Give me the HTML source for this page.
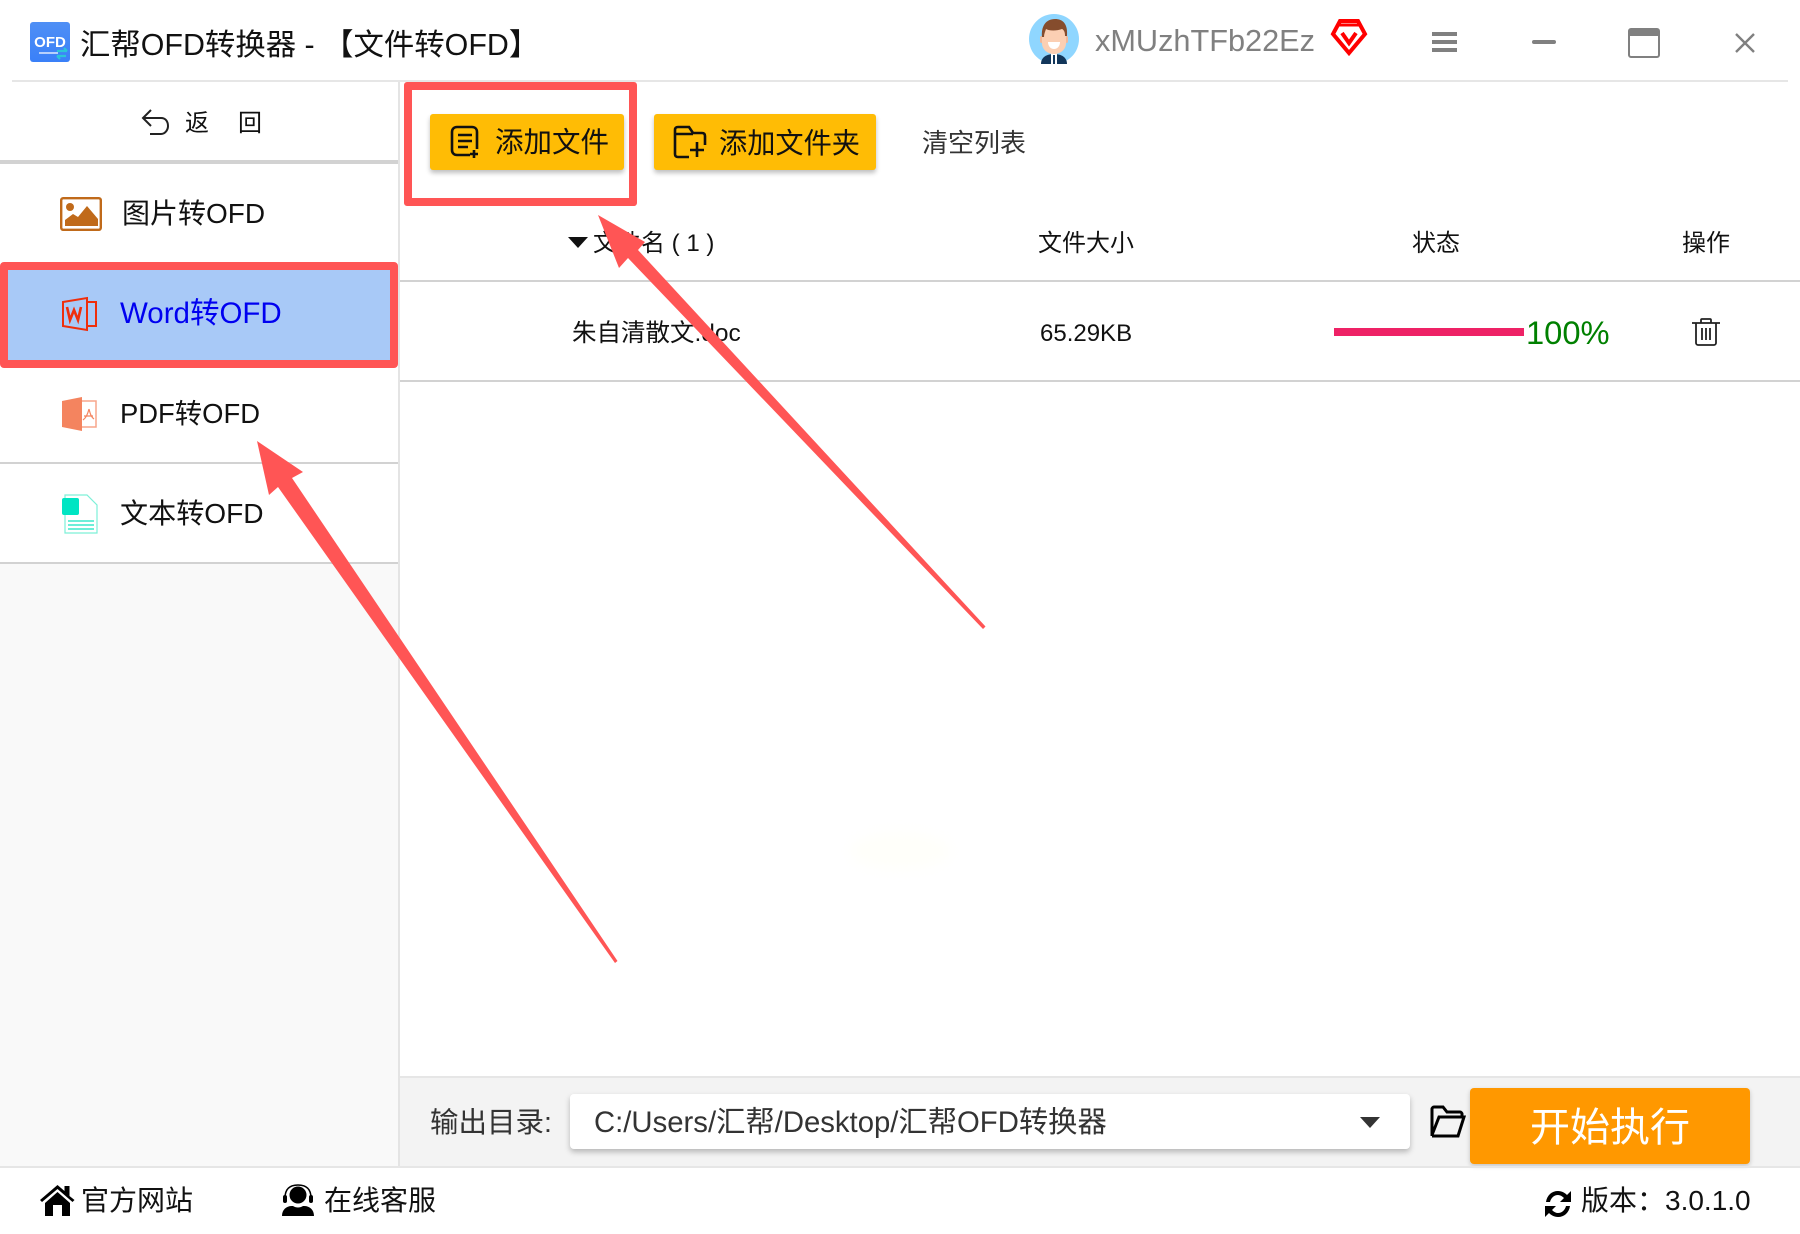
<!DOCTYPE html>
<html lang="zh">
<head>
<meta charset="utf-8">
<title>汇帮OFD转换器</title>
<style>
html,body{margin:0;padding:0;background:#fff}
#app{position:relative;width:1800px;height:1234px;overflow:hidden;background:#fff;font-family:"Liberation Sans","Noto Sans CJK SC",sans-serif;color:#111}
.t{position:absolute;white-space:nowrap;line-height:40px;height:40px;margin-top:1px}
.b{position:absolute}
svg{position:absolute;overflow:visible}
</style>
</head>
<body>
<div id="app">
  <!-- title bar -->
  <div class="b" style="left:12px;top:80px;width:1776px;height:2px;background:#e6e6e6"></div>
  <svg style="left:30px;top:22px" width="40" height="40" viewBox="0 0 40 40">
    <defs><linearGradient id="lg" x1="0" y1="0" x2="0" y2="1"><stop offset="0" stop-color="#4f8ff5"/><stop offset="1" stop-color="#3a80f8"/></linearGradient></defs>
    <rect width="40" height="40" rx="3" fill="url(#lg)"/>
    <text x="20" y="25" font-family="Liberation Sans" font-weight="700" font-size="15" fill="#fff" text-anchor="middle">OFD</text>
    <path d="M9 31h19" stroke="#fff" stroke-width="1.2"/>
    <path d="M27 29h10M37 29l-3-3M27 34h9M27 34l3 3" stroke="#2cc5d8" stroke-width="2.2" fill="none"/>
  </svg>
  <div class="t" style="left:80px;top:24px;font-size:30.4px">汇帮OFD转换器 - 【文件转OFD】</div>

  <!-- avatar -->
  <svg style="left:1029px;top:14px" width="50" height="50" viewBox="0 0 50 50">
    <circle cx="25" cy="25" r="25" fill="#8fd6ff"/>
    <path d="M12 50c0-7 6-10 13-10s13 3 13 10z" fill="#12365a"/>
    <path d="M22 39h6v11h-6z" fill="#fff"/><path d="M24 41h2v9h-2z" fill="#12365a"/>
    <rect x="11" y="22" width="3" height="7" rx="1.5" fill="#f0b89a"/><rect x="36" y="22" width="3" height="7" rx="1.5" fill="#f0b89a"/>
    <path d="M13 15h24v14c0 7-6 11-12 11s-12-4-12-11z" fill="#fbcfb3"/>
    <path d="M13 23C12 12 17 5 26 5c8 0 13 5 12 17h-2c0-4-1-6-3-7-5 2-13 2-16 0-1 3-2 5-2 8z" fill="#854c2d"/>
    <path d="M19 28h12c0 4-2.500 7-6 7s-6-3-6-7z" fill="#fff"/>
  </svg>
  <div class="t" style="left:1095px;top:20px;font-size:30.7px;color:#808080">xMUzhTFb22Ez</div>
  <!-- gem -->
  <svg style="left:1331px;top:19px" width="36" height="36" viewBox="0 0 36 36">
    <path d="M9 2h18l7 13-16 19L2 15z" fill="none" stroke="#f00" stroke-width="4"/>
    <path d="M11 14l7 10 7-10" fill="none" stroke="#f00" stroke-width="4"/>
    <path d="M7 6h22" stroke="#f00" stroke-width="3"/>
  </svg>
  <!-- window controls -->
  <div class="b" style="left:1432px;top:32px;width:25px;height:4px;background:#808080"></div>
  <div class="b" style="left:1432px;top:40px;width:25px;height:4px;background:#808080"></div>
  <div class="b" style="left:1432px;top:48px;width:25px;height:4px;background:#808080"></div>
  <div class="b" style="left:1532px;top:40px;width:24px;height:4px;background:#808080;border-radius:2px"></div>
  <div class="b" style="left:1628px;top:28px;width:28px;height:20px;border:2px solid #808080;border-top-width:8px;border-radius:3px;"></div>
  <svg style="left:1735px;top:33px" width="20" height="20" viewBox="0 0 20 20"><path d="M1 1l18 18M19 1L1 19" stroke="#808080" stroke-width="2.4"/></svg>

  <!-- sidebar -->
  <div class="b" style="left:398px;top:82px;width:2px;height:1085px;background:#e4e4e4"></div>
  <div class="b" style="left:0;top:564px;width:398px;height:603px;background:#f9f9f9"></div>
  <svg style="left:141px;top:109px" width="30" height="28" viewBox="0 0 30 28"><path d="M10 1L2 9l8 8M2 9h18c5 0 7 4 7 8s-3 8-7 8H9" fill="none" stroke="#222" stroke-width="2"/></svg>
  <div class="t" style="left:185px;top:103px;font-size:24px;letter-spacing:0">返</div>
  <div class="t" style="left:238px;top:103px;font-size:24px">回</div>
  <div class="b" style="left:0;top:160px;width:398px;height:4px;background:#d2d2d2"></div>

  <svg style="left:60px;top:197px" width="42" height="34" viewBox="0 0 42 34">
    <rect x="1.2" y="1.2" width="39.6" height="31.6" rx="2" fill="none" stroke="#c06a1a" stroke-width="2.4"/>
    <circle cx="10" cy="10" r="4" fill="#c06a1a"/>
    <path d="M5 29v-6l8-6 5 3 9-11 11 13v7z" fill="#c06a1a"/>
  </svg>
  <div class="t" style="left:122px;top:193px;font-size:28px">图片转OFD</div>

  <div class="b" style="left:0;top:262px;width:398px;height:106px;box-sizing:border-box;background:#a8c9f7;border:8px solid #ff5555;border-radius:4px"></div>
  <svg style="left:62px;top:297px" width="35" height="34" viewBox="0 0 35 34">
    <path d="M1 5L25 1v32L1 29z" fill="none" stroke="#ef2e0b" stroke-width="2"/>
    <path d="M25 5h9v24h-9" fill="none" stroke="#ef2e0b" stroke-width="2"/>
    <path d="M5 10l3 13 4-10 4 10 3-13" fill="none" stroke="#ef2e0b" stroke-width="2.6"/>
  </svg>
  <div class="t" style="left:120px;top:293px;font-size:29.5px;color:#0000f0">Word转OFD</div>

  <svg style="left:62px;top:397px" width="35" height="34" viewBox="0 0 35 34">
    <path d="M0 4L20 0v34L0 30z" fill="#f4845f"/>
    <path d="M20 4h14v26H20" fill="none" stroke="#f7a58b" stroke-width="1.5"/>
    <path d="M27 12c-1 4-3 9-6 11M27 12c1 4 2 8 5 10M22 19h9" fill="none" stroke="#f4845f" stroke-width="1.2"/>
  </svg>
  <div class="t" style="left:120px;top:393px;font-size:27.4px">PDF转OFD</div>
  <div class="b" style="left:0;top:462px;width:398px;height:2px;background:#d2d2d2"></div>

  <svg style="left:62px;top:494px" width="36" height="40" viewBox="0 0 36 40">
    <path d="M3 1h22l10 10v28H3z" fill="#fff" stroke="#7df0d8" stroke-width="1.2"/>
    <rect x="0" y="4" width="17" height="17" rx="2" fill="#00e5c3"/>
    <path d="M6 27h26M6 31h26M6 35h26" stroke="#3ce8cc" stroke-width="1.4"/>
  </svg>
  <div class="t" style="left:120px;top:493px;font-size:28.1px">文本转OFD</div>
  <div class="b" style="left:0;top:562px;width:398px;height:2px;background:#d2d2d2"></div>

  <!-- toolbar -->
  <div class="b" style="left:404px;top:82px;width:233px;height:124px;box-sizing:border-box;border:8px solid #ff5555;border-radius:3px"></div>
  <div class="b" style="left:430px;top:114px;width:194px;height:56px;background:#ffbc05;border-radius:3px;box-shadow:0 3px 5px rgba(0,0,0,.25)"></div>
  <svg style="left:450px;top:126px" width="32" height="32" viewBox="0 0 32 32">
    <path d="M20 29H7c-3 0-5-2-5-5V6c0-3 2-5 5-5h15c3 0 5 2 5 5v17" fill="none" stroke="#111" stroke-width="2.6"/>
    <path d="M8 9h14M8 15h14M8 21h10M24 24v8M20 28h8" stroke="#111" stroke-width="2.6"/>
  </svg>
  <div class="t" style="left:495px;top:122px;font-size:28.5px">添加文件</div>

  <div class="b" style="left:654px;top:114px;width:222px;height:56px;background:#ffbc05;border-radius:3px;box-shadow:0 3px 5px rgba(0,0,0,.25)"></div>
  <svg style="left:673px;top:126px" width="33" height="32" viewBox="0 0 33 32">
    <path d="M16 31H5c-2 0-3-1-3-3V4c0-2 1-3 3-3h11l4 6h9c2 0 3 1 3 3v9M2 8h18" fill="none" stroke="#111" stroke-width="2.6"/>
    <path d="M24 16v15M17 24h14" stroke="#111" stroke-width="2.6"/>
  </svg>
  <div class="t" style="left:719px;top:122px;font-size:28.2px">添加文件夹</div>
  <div class="t" style="left:922px;top:122px;font-size:26px;color:#333">清空列表</div>

  <!-- table -->
  <svg style="left:568px;top:237px" width="20" height="11" viewBox="0 0 20 11"><path d="M0 0h20L10 11z" fill="#111"/></svg>
  <div class="t" style="left:593px;top:223px;font-size:24px">文件名 ( 1 )</div>
  <div class="t" style="left:1038px;top:223px;font-size:24px">文件大小</div>
  <div class="t" style="left:1412px;top:223px;font-size:24px">状态</div>
  <div class="t" style="left:1682px;top:223px;font-size:24px">操作</div>
  <div class="b" style="left:400px;top:280px;width:1400px;height:2px;background:#d2d2d2"></div>
  <div class="t" style="left:572px;top:313px;font-size:24.5px">朱自清散文.doc</div>
  <div class="t" style="left:1040px;top:313px;font-size:24px">65.29KB</div>
  <div class="b" style="left:1334px;top:328px;width:190px;height:8px;background:#ee2266"></div>
  <div class="t" style="left:1526px;top:312px;font-size:32.7px;color:#008000">100%</div>
  <svg style="left:1692px;top:318px" width="28" height="28" viewBox="0 0 28 28">
    <path d="M0 5h28M9 5V2c0-1 1-1 1-1h8s1 0 1 1v3M4 5v20c0 1 1 2 2 2h16c1 0 2-1 2-2V5M10 10v12M14 10v12M18 10v12" fill="none" stroke="#222" stroke-width="1.8"/>
  </svg>
  <div class="b" style="left:400px;top:380px;width:1400px;height:2px;background:#d2d2d2"></div>

  <!-- bottom bar -->
  <div class="b" style="left:400px;top:1076px;width:1400px;height:91px;background:#f3f3f3;border-top:2px solid #e6e6e6;box-sizing:border-box"></div>
  <div class="t" style="left:430px;top:1102px;font-size:28.5px;color:#333">输出目录:</div>
  <div class="b" style="left:570px;top:1094px;width:840px;height:55px;background:#fff;border-radius:4px;box-shadow:0 3px 6px rgba(0,0,0,.25)"></div>
  <div class="t" style="left:594px;top:1102px;font-size:29.3px;color:#333">C:/Users/汇帮/Desktop/汇帮OFD转换器</div>
  <svg style="left:1360px;top:1117px" width="20" height="11" viewBox="0 0 20 11"><path d="M0 0h20L10 11z" fill="#333"/></svg>
  <svg style="left:1430px;top:1106px" width="36" height="31" viewBox="0 0 36 31">
    <path d="M2 30V3c0-1 1-2 2-2h9l4 5h13c1 0 2 1 2 2v3M2 29L9 11h25l-6 19H2" fill="none" stroke="#000" stroke-width="3"/>
  </svg>
  <div class="b" style="left:1470px;top:1088px;width:280px;height:76px;background:#ff9800;border-radius:4px;box-shadow:0 2px 5px rgba(0,0,0,.2)"></div>
  <div class="t" style="left:1470px;top:1107px;width:280px;text-align:center;font-size:40px;color:#fff">开始执行</div>

  <!-- footer -->
  <div class="b" style="left:0;top:1166px;width:1800px;height:2px;background:#e6e6e6"></div>
  <svg style="left:40px;top:1184px" width="35" height="32" viewBox="0 0 35 32">
    <path d="M0 16L17.500 1l7 6V2h5v10l5 4-2 2L17.500 5 2 18z" fill="#000"/>
    <path d="M5 19L17.500 8 30 19v13H22V21h-9v11H5z" fill="#000"/>
  </svg>
  <div class="t" style="left:81px;top:1180px;font-size:28px">官方网站</div>
  <svg style="left:282px;top:1184px" width="32" height="32" viewBox="0 0 32 32">
    <circle cx="16" cy="11" r="8.500" fill="#000"/>
    <path d="M3 14C3 4 9 1 16 1s13 3 13 13" fill="none" stroke="#000" stroke-width="1.500"/>
    <rect x="1" y="11" width="4" height="8" rx="2" fill="#000"/><rect x="27" y="11" width="4" height="8" rx="2" fill="#000"/>
    <path d="M0 32c0-6 4-10 10-10h1c3 2 7 2 10 0h1c6 0 10 4 10 10z" fill="#000"/>
  </svg>
  <div class="t" style="left:324px;top:1180px;font-size:28px">在线客服</div>
  <svg style="left:1542px;top:1188px" width="32" height="32" viewBox="0 0 32 32">
    <path d="M4 14C5 7 10 3 16 3c4 0 7 2 9 4l4-4v11H18l4-4c-2-2-4-3-6-3-4 0-7 3-8 7z" fill="#000"/>
    <path d="M28 18c-1 7-6 11-12 11-4 0-7-2-9-4l-4 4V18h11l-4 4c2 2 4 3 6 3 4 0 7-3 8-7z" fill="#000"/>
  </svg>
  <div class="t" style="left:1581px;top:1180px;font-size:28px">版本：3.0.1.0</div>

  <!-- faint smudge -->
  <div class="b" style="left:850px;top:832px;width:100px;height:38px;background:#fffffa;border-radius:50%;filter:blur(6px)"></div>

  <!-- annotation arrows -->
  <svg style="left:0;top:0" width="1800" height="1234" viewBox="0 0 1800 1234">
    <path d="M598 215L645 242 638 250 985.500 626.500 983 629 628 258 619 268z" fill="#ff5555"/>
    <path d="M257 441L303 472 292 478 617.500 961 615 963 278 487 269 495z" fill="#ff5555"/>
  </svg>
</div>
</body>
</html>
